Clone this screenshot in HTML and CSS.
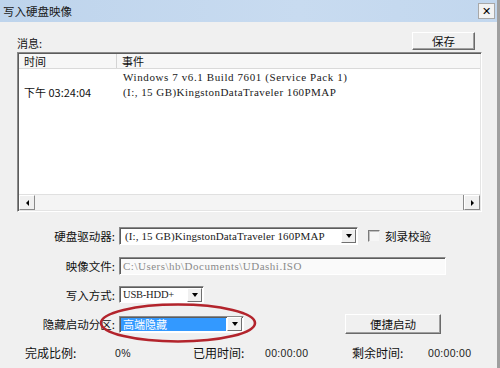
FILE: index.html
```html
<!DOCTYPE html>
<html lang="zh-CN">
<head>
<meta charset="utf-8">
<title>写入硬盘映像</title>
<link rel="stylesheet" href="styles.css">
</head>
<body>
<div class="window">
  <div class="titlebar">
    <span class="title">写入硬盘映像</span>
    <span class="close">✕</span>
  </div>
  <div class="content">
    <div class="msg-head">
      <span class="msg-label">消息:</span>
      <div class="btn save">保存</div>
    </div>
    <div class="list">
      <div class="list-head">
        <div class="col-time">时间</div>
        <div class="col-event">事件</div>
      </div>
      <div class="list-rows">
        <div class="lrow"><div class="col-time"></div><div class="col-event mono">Windows 7 v6.1 Build 7601 (Service Pack 1)</div></div>
        <div class="lrow"><div class="col-time">下午 03:24:04</div><div class="col-event mono">(I:, 15 GB)KingstonDataTraveler 160PMAP</div></div>
      </div>
      <div class="hscroll">
        <span class="sbtn"><span class="tri-left"></span></span>
        <span class="track"></span>
        <span class="sbtn"><span class="tri-right"></span></span>
      </div>
    </div>
    <div class="form">
      <div class="label">硬盘驱动器:</div>
      <div class="ctrl">
        <div class="select drive"><span class="val mono">(I:, 15 GB)KingstonDataTraveler 160PMAP</span><span class="arr"><span class="tri-down"></span></span></div>
        <span class="check"></span>
        <span class="check-label">刻录校验</span>
      </div>
      <div class="label">映像文件:</div>
      <div class="ctrl">
        <div class="input"><span class="val mono">C:\Users\hb\Documents\UDashi.ISO</span></div>
      </div>
      <div class="label">写入方式:</div>
      <div class="ctrl">
        <div class="select mode"><span class="val mono">USB-HDD+</span><span class="arr"><span class="tri-down"></span></span></div>
      </div>
      <div class="label">隐藏启动分区:</div>
      <div class="ctrl">
        <div class="select hide"><span class="val sel">高端隐藏</span><span class="arr"><span class="tri-down"></span></span></div>
        <div class="btn quick">便捷启动</div>
      </div>
    </div>
    <div class="status">
      <span>完成比例:</span>
      <span class="num">0%</span>
      <span>已用时间:</span>
      <span class="num">00:00:00</span>
      <span>剩余时间:</span>
      <span class="num">00:00:00</span>
    </div>
  </div>
  <svg class="circle" width="164" height="44" viewBox="0 0 164 44">
    <ellipse cx="80" cy="21" rx="77" ry="18.5" fill="none" stroke="#b3242c" stroke-width="2.6"/>
  </svg>
</div>
</body>
</html>
```

FILE: styles.css
```css
* { box-sizing: border-box; }
body {
  margin: 0;
  width: 500px;
  height: 368px;
  overflow: hidden;
  background: #f0f0f0;
  font-family: "Noto Sans CJK SC", "Noto Sans", sans-serif;
  font-size: 11px;
  color: #111;
}
.window {
  position: relative;
  width: 500px;
  height: 368px;
  border-right: 3px solid #9f9f9f;
  display: flex;
  flex-direction: column;
}
.titlebar {
  height: 22px;
  background: linear-gradient(90deg, #bed4ec, #c8dbf0 60%, #c2d7ee);
  display: flex;
  align-items: center;
  justify-content: space-between;
  padding: 0 2px 0 3px;
}
.title { font-size: 11.5px; line-height: 14px; color: #1a1a1a; }
.close {
  width: 17px;
  height: 16px;
  background: #f3f3f3;
  border: 1px solid #a8a8a8;
  display: flex;
  align-items: center;
  justify-content: center;
  font-family: "DejaVu Sans", sans-serif;
  font-weight: bold;
  font-size: 11px;
  line-height: 1;
  color: #000;
}
.content {
  padding: 10px 15px 0 17px;
}
.msg-head {
  display: flex;
  justify-content: space-between;
  align-items: flex-end;
  height: 18px;
  padding-right: 7px;
}
.msg-label { line-height: 14px; margin-bottom: 0; }
.btn {
  background: #f0f0f0;
  border: 1px solid;
  border-color: #ffffff #6a6a6a #6a6a6a #ffffff;
  box-shadow: inset -1px -1px #a0a0a0;
  display: flex;
  align-items: center;
  justify-content: center;
  font-size: 11.5px;
  line-height: 14px;
}
.save { width: 63px; height: 18px; }
.list {
  margin-top: 2px;
  height: 160px;
  background: #fff;
  border: 1px solid;
  border-color: #8a8a8a #ffffff #ffffff #8a8a8a;
  box-shadow: inset 1px 1px #5c5c5c, inset -1px -1px #e4e4e4;
  padding: 1px;
  display: flex;
  flex-direction: column;
}
.list-head {
  height: 15px;
  display: flex;
  background: #f7f7f7;
  border-bottom: 1px solid #dadada;
}
.list-head .col-time { border-right: 1px solid #d4d4d4; }
.col-time {
  width: 98px;
  padding-left: 5px;
  line-height: 14px;
  white-space: nowrap;
}
.col-event {
  flex: 1;
  padding-left: 5px;
  line-height: 14px;
  white-space: nowrap;
}
.list-rows { flex: 1; display: flex; flex-direction: column; padding-top: 0; }
.lrow { height: 15px; display: flex; align-items: center; }
.lrow .col-event { padding-left: 6px; }
.mono {
  font-family: "Liberation Serif", serif;
  font-size: 11px;
  letter-spacing: 0.6px;
  color: #1a1a1a;
}
.lrow:nth-child(2) .mono { letter-spacing: 0.45px; }
.hscroll {
  height: 16px;
  display: flex;
  background: #f0f0f0;
  border-top: 1px solid #e0e0e0;
}
.sbtn {
  width: 16px;
  height: 15px;
  background: #f0f0f0;
  border: 1px solid;
  border-color: #ffffff #8a8a8a #8a8a8a #ffffff;
  display: flex;
  align-items: center;
  justify-content: center;
}
.track { flex: 1; background: #f4f4f4; border-right: 1px solid #8a8a8a; }
.tri-left { width: 0; height: 0; border-top: 3px solid transparent; border-bottom: 3px solid transparent; border-right: 3px solid #000; }
.tri-right { width: 0; height: 0; border-top: 3px solid transparent; border-bottom: 3px solid transparent; border-left: 3px solid #000; }
.tri-down { width: 0; height: 0; border-left: 3.5px solid transparent; border-right: 3.5px solid transparent; border-top: 4px solid #000; }
.form {
  margin-top: 15px;
  display: grid;
  grid-template-columns: 98px 1fr;
  grid-template-rows: 30px 29px 28px 20px;
  column-gap: 4px;
}
.label {
  text-align: right;
  line-height: 18px;
  font-size: 11.5px;
  white-space: nowrap;
}
.form .label:nth-of-type(7) { line-height: 20px; }
.ctrl { display: flex; align-items: flex-start; }
.ctrl:last-child { align-items: center; }
.select, .input {
  height: 18px;
  background: #fff;
  border: 1px solid;
  border-color: #8a8a8a #ffffff #ffffff #8a8a8a;
  box-shadow: inset 1px 1px #5c5c5c;
  padding: 1px;
  display: flex;
  align-items: center;
}
.val { flex: 1; padding-left: 3px; line-height: 14px; white-space: nowrap; overflow: hidden; }
.arr {
  width: 15px;
  height: 14px;
  background: #f0f0f0;
  border: 1px solid;
  border-color: #ffffff #707070 #707070 #ffffff;
  display: flex;
  align-items: center;
  justify-content: center;
}
.drive { width: 239px; }
.drive .val { padding-left: 4px; letter-spacing: 0.1px; }
.input { width: 327px; background: #fafafa; }
.input .val { color: #8a8a8a; padding-left: 2px; letter-spacing: 0.5px; }
.mode { width: 85px; height: 17px; }
.mode .val { font-size: 10.5px; letter-spacing: -0.2px; padding-left: 2px; }
.hide { width: 125px; height: 17px; }
.sel {
  background: #3399ff;
  color: #fff;
  margin-right: 1px;
  padding-left: 2px;
  height: 13px;
  line-height: 13px;
  font-size: 11px;
  overflow: visible;
}
.quick { width: 96px; height: 20px; margin-left: 101px; }
.check {
  width: 12px;
  height: 12px;
  margin: 3px 0 0 10px;
  background: #f6f6f6;
  border: 1px solid;
  border-color: #7a7a7a #f0f0f0 #f0f0f0 #7a7a7a;
  box-shadow: inset 1px 1px #c0c0c0;
}
.check-label { margin-left: 5px; line-height: 18px; font-size: 11.5px; }
.status {
  margin-top: 12px;
  padding-left: 8px;
  display: grid;
  grid-template-columns: 90px 78px 72px 87px 76px auto;
  font-size: 12px;
  line-height: 14px;
  white-space: nowrap;
}
.status .num { font-family: "Liberation Sans", sans-serif; font-size: 10.5px; letter-spacing: 0.3px; color: #222; }
.circle {
  position: absolute;
  left: 98px;
  top: 302px;
}
```
